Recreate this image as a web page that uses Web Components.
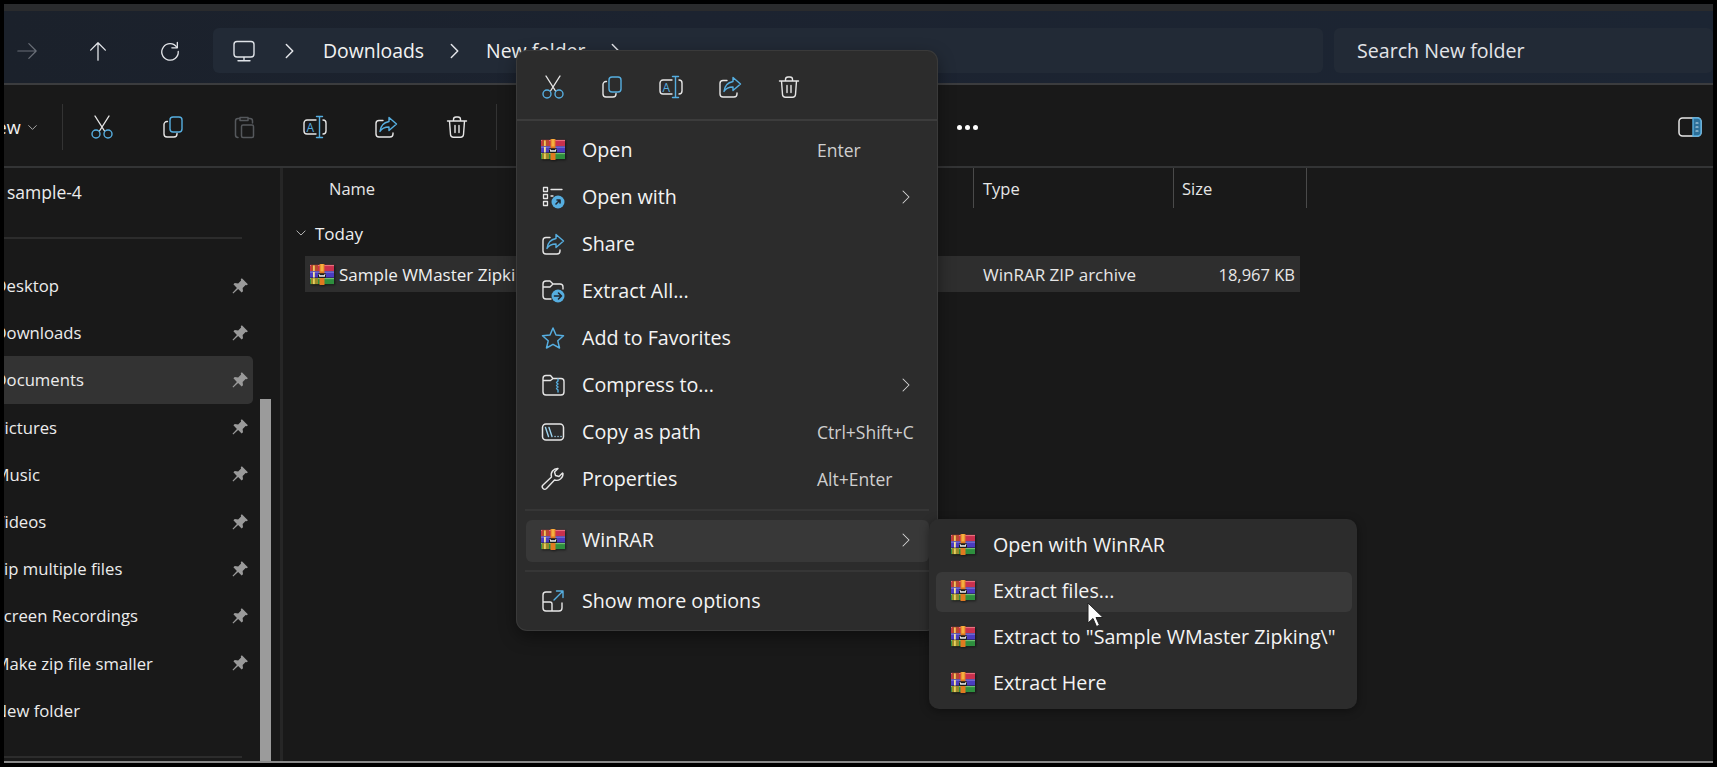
<!DOCTYPE html>
<html lang="en">
<head>
<meta charset="utf-8">
<title>New folder - File Explorer</title>
<style>
  html, body { margin: 0; height: 100%; background: #000; overflow: hidden; }
  body { font-family: "Open Sans", "Liberation Sans", sans-serif; color: #f2f2f2; }
</style>
</head>
<body>

<explorer-window>
  <address-bar></address-bar>
  <command-bar></command-bar>
  <div style="display:flex;flex:1;min-height:0">
    <nav-pane>
      <nav-item pinned>Desktop</nav-item>
      <nav-item pinned>Downloads</nav-item>
      <nav-item pinned active>Documents</nav-item>
      <nav-item pinned>Pictures</nav-item>
      <nav-item pinned>Music</nav-item>
      <nav-item pinned>Videos</nav-item>
      <nav-item pinned>Zip multiple files</nav-item>
      <nav-item pinned>Screen Recordings</nav-item>
      <nav-item pinned>Make zip file smaller</nav-item>
      <nav-item>New folder</nav-item>
    </nav-pane>
    <file-list></file-list>
  </div>
</explorer-window>

<context-menu>
  <menu-item icon="rar" shortcut="Enter">Open</menu-item>
  <menu-item icon="openwith" arrow>Open with</menu-item>
  <menu-item icon="share">Share</menu-item>
  <menu-item icon="extract">Extract All...</menu-item>
  <menu-item icon="star">Add to Favorites</menu-item>
  <menu-item icon="compress" arrow>Compress to...</menu-item>
  <menu-item icon="path" shortcut="Ctrl+Shift+C">Copy as path</menu-item>
  <menu-item icon="wrench" shortcut="Alt+Enter">Properties</menu-item>
</context-menu>

<sub-menu>
  <menu-item icon="rar" compact>Open with WinRAR</menu-item>
  <menu-item icon="rar" compact hot>Extract files...</menu-item>
  <menu-item icon="rar" compact>Extract to "Sample WMaster Zipking\"</menu-item>
  <menu-item icon="rar" compact>Extract Here</menu-item>
</sub-menu>

<mouse-cursor></mouse-cursor>

<script>
// Icon paths, all in a 24x24 box. W = white stroke, B = blue stroke
const W = '#e6e6e6';
const B = '#56aee0';
const line = (d, c = W, sw = 1.4) => `<path d="${d}" fill="none" stroke="${c}" stroke-width="${sw}" stroke-linecap="round" stroke-linejoin="round"/>`;

const ICONS = {
  forward: line('M2 12H22M14 4l8 8-8 8', '#6a6f78', 1.3),
  up: line('M12 22V3M4 11l8-8 8 8', '#e4e6ea', 1.4),
  refresh: line('M19.5 8A9 9 0 1 0 21 12.5', '#e4e6ea', 1.4) + line('M20 2.5V8.5H14', '#e4e6ea', 1.4),
  monitor: line('M5 2.5H19a3 3 0 0 1 3 3V15a3 3 0 0 1-3 3H5a3 3 0 0 1-3-3V5.500a3 3 0 0 1 3-3zM12 18v3.500M6 21.800H18', '#dfe3e8', 1.4),
  chev: line('M8 5l7 7-7 7', '#e4e6ea', 1.6),
  cut: line('M5 1L14.500 16M19 1L9.500 16') + line('M10 19a4 4 0 1 1-8 0 4 4 0 0 1 8 0zM22 19a4 4 0 1 1-8 0 4 4 0 0 1 8 0z', B),
  copy: `<rect x="9" y="2" width="12" height="15" rx="3" fill="none" stroke="${B}" stroke-width="1.4"/>` + line('M6.500 6.500H6a3 3 0 0 0-3 3V19a3 3 0 0 0 3 3h7a3 3 0 0 0 3-3v-.5'),
  paste: line('M8 3.500H6a2.500 2.500 0 0 0-2.500 2.500V20a2.500 2.500 0 0 0 2.500 2.500M16 3.500h2A2.500 2.500 0 0 1 20.500 6v2M8 2.500h8v3H8zM11 10h9a1.500 1.500 0 0 1 1.500 1.500V21a1.500 1.500 0 0 1-1.500 1.500h-9A1.500 1.500 0 0 1 9.500 21v-9.500A1.500 1.500 0 0 1 11 10z', '#55585c', 1.5),
  rename: line('M13 5H4a3 3 0 0 0-3 3v8a3 3 0 0 0 3 3h9M20 5a3 3 0 0 1 3 3v8a3 3 0 0 1-3 3') + line('M16.500 1.500v21M13.500 1.500h6M13.500 22.500h6', B) + `<text x="7.300" y="16.500" text-anchor="middle" font-family="Open Sans, sans-serif" font-size="12" fill="${B}">A</text>`,
  share: line('M9 5.500H5a3 3 0 0 0-3 3V19a3 3 0 0 0 3 3h11a3 3 0 0 0 3-3v-1') + line('M15 2.500l7.500 6.500-7.500 6.500V12c-4 0-7 1-9 4.500C6.500 11 10 7.500 15 6.500z', B),
  trash: line('M2.500 6h19M8.500 6V4.500a2.500 2.500 0 0 1 2.500-2.500h2a2.500 2.500 0 0 1 2.500 2.500V6M4.500 6l1 13.500a3 3 0 0 0 3 2.800h7a3 3 0 0 0 3-2.800l1-13.500M10 10.500v7M14 10.500v7'),
  openwith: line('M2.500 2.500h4v4h-4zM2.500 9.500h4v4h-4zM2.500 16.500h4v4h-4zM10 4.500h11M10 11h2', W, 1.3) + `<circle cx="17" cy="17" r="6.500" fill="${B}"/>` + line('M15 19l4-4M16 15h3v3', '#20262e', 1.6),
  extract: line('M2 8V5a3 3 0 0 1 3-3h4l3 3h7a3 3 0 0 1 3 3v2M2 8v9a3 3 0 0 0 3 3h5M2 8h7l3-3') + `<circle cx="17" cy="17" r="6.500" fill="${B}"/>` + line('M13.500 17h7M17.500 14l3 3-3 3', '#20262e', 1.6),
  star: line('M12 2l3 7 7.500.8-5.700 5 1.700 7.200L12 18.300 5.500 22l1.700-7.200-5.700-5L9 9z', B, 1.5),
  compress: line('M6 2.500h3.500l2.500 3h8a3 3 0 0 1 3 3V19a3 3 0 0 1-3 3H5a3 3 0 0 1-3-3V5.500a3 3 0 0 1 3-3zM2 7.500h7.500l2.500-2') + line('M17 6v2l-1.500 1.500L17 11l-1.500 1.500L17 14l-1.500 1.500L17 17v2', B, 1.4),
  path: `<rect x="1.500" y="4" width="21" height="16" rx="3.500" fill="none" stroke="${W}" stroke-width="1.500"/>` + line('M4.500 7.500l3 9M8 7.500l3 9M14 16.500h.1M17 16.500h.1M20 16.500h.1', '#9ed3ee', 1.4),
  wrench: line('M22 6.500a6.500 6.500 0 0 1-8.500 6.500L5.500 21.500a2.400 2.400 0 0 1-3.500-3.500l8.500-8A6.500 6.500 0 0 1 17 1.500l-3.500 3.500 1 3.500 3.500 1 3.500-3.500z'),
  more: line('M10 3H5a3 3 0 0 0-3 3v13a3 3 0 0 0 3 3h13a3 3 0 0 0 3-3v-5M2 13h7a2 2 0 0 1 2 2v7') + line('M13 11L22 2M15.500 2H22v6.500', B),
  panel: `<rect x="1" y="3" width="22" height="18" rx="3.500" fill="none" stroke="${W}" stroke-width="1.500"/><path d="M15 3h4.500A3.500 3.500 0 0 1 23 6.500v11a3.500 3.500 0 0 1-3.500 3.500H15z" fill="#2d6f98" stroke="${B}" stroke-width="1.400"/>` + line('M18 8h2M18 12h2M18 16h2', '#cfeaf8', 1.200),
  pin: '<path d="M14.500 1.500l8 8-1.500 1.500-1.500-.5-4 4 .5 4.500-1.800 1.800-4.700-4.700L3 22l-1-1 5.900-6.500-4.700-4.700L5 8l4.500.5 4-4-.5-1.500z" fill="#9a9a9a"/>',
  chevDown: line('M5 8.500l7 7 7-7', '#c8c8c8', 1.500),
  chevSmall: line('M8 4l8 8-8 8', '#d6d6d6', 1.400)
};

/* Generic inline svg icon, picked with name="" */
class UiIcon extends HTMLElement {
  connectedCallback() {
    if (this.shadowRoot) return;
    const size = this.getAttribute('size') || 24;
    const shadow = this.attachShadow({ mode: 'open' });
    shadow.innerHTML = `
      <style>
        :host { display: inline-flex; flex: none; width: ${size}px; height: ${size}px; }
        svg { width: 100%; height: 100%; display: block; overflow: visible; }
      </style>
      <svg viewBox="0 0 24 24" aria-hidden="true">${ICONS[this.getAttribute('name')] || ''}</svg>`;
  }
}
customElements.define('ui-icon', UiIcon);

/* The WinRAR stack of books */
const rarTemplate = document.createElement('template');
rarTemplate.innerHTML = `
  <style>
    :host { display: inline-flex; align-items: center; flex: none; width: 24px; height: 24px; }
    svg { width: 100%; height: 21px; display: block; filter: drop-shadow(1px 1px 1px rgb(0 0 0 / .55)); }
  </style>
  <svg viewBox="0 1 24 22.500" preserveAspectRatio="none" aria-hidden="true">
    <rect x="0" y="2" width="24" height="6.500" fill="#c9304e"/>
    <rect x="0" y="2" width="24" height="1.200" fill="#e8707c"/>
    <rect x="0" y="9" width="24" height="6.500" fill="#4a3cc0"/>
    <rect x="0" y="9" width="24" height="1.200" fill="#8a80e0"/>
    <rect x="0" y="16" width="24" height="6.500" fill="#2e8f3e"/>
    <rect x="0" y="16" width="24" height="1.200" fill="#70c070"/>
    <rect x="1" y="2" width="7" height="6.500" fill="#b84a2e"/>
    <rect x="1" y="16" width="7" height="6.500" fill="#9a8a2a"/>
    <rect x="3" y="2.500" width="1.800" height="6" fill="#f0c860"/>
    <rect x="3" y="9.500" width="1.800" height="6" fill="#f4e4a0"/>
    <rect x="3" y="16.500" width="1.800" height="6" fill="#e8d060"/>
    <rect x="9.500" y="1" width="5" height="22.500" fill="#e07a20"/>
    <rect x="10.500" y="1" width="3" height="8" fill="#f4b040"/>
    <rect x="8" y="11" width="8" height="5" rx="1" fill="#1d1d1d"/>
    <path d="M9 11.800l1 3 1-2 1 2 1-2 1 2 1-3" fill="none" stroke="#f0f0f0" stroke-width="1"/>
  </svg>`;
class RarIcon extends HTMLElement {
  connectedCallback() {
    if (this.shadowRoot) return;
    this.attachShadow({ mode: 'open' }).appendChild(rarTemplate.content.cloneNode(true));
  }
}
customElements.define('rar-icon', RarIcon);

/* Outer window: black 4px frame round the whole thing */
const windowTemplate = document.createElement('template');
windowTemplate.innerHTML = `
  <style>
    :host {
      display: flex;
      flex-direction: column;
      height: 759px;
      margin: 4px 4px 0;
      background: #191919;
      overflow: hidden;
      border-bottom: 2px solid #8a8a8a;
      box-sizing: border-box;
    }
    .title { height: 7px; flex: none; background: #2a2b2d; }
  </style>
  <div class="title"></div>
  <slot></slot>`;
class ExplorerWindow extends HTMLElement {
  connectedCallback() {
    if (this.shadowRoot) return;
    this.attachShadow({ mode: 'open' }).appendChild(windowTemplate.content.cloneNode(true));
  }
}
customElements.define('explorer-window', ExplorerWindow);

/* Back / up / refresh, breadcrumb and search */
const addressTemplate = document.createElement('template');
addressTemplate.innerHTML = `
  <style>
    :host {
      display: flex;
      flex: none;
      height: 74px;
      box-sizing: border-box;
      padding: 17px 0 10px;
      background: linear-gradient(90deg, #1b212b, #1c2330 40%, #1c2533);
      background-color: #1b2330;
      border-bottom: 2px solid #3b3c3e;
      gap: 11px;
      font-size: 19.400px;
    }
    .nav { display: flex; align-items: center; width: 209px; flex: none; }
    .nav ui-icon:nth-child(1) { margin-left: 12px; }
    .nav ui-icon:nth-child(2) { margin-left: 49px; }
    .nav ui-icon:nth-child(3) { margin-left: 50px; }
    .crumbs, .search {
      background: #222a36;
      border-radius: 6px;
      display: flex;
      align-items: center;
      white-space: nowrap;
    }
    .crumbs { width: 1110px; flex: none; margin-left: -11px; }
    .crumbs ui-icon.pc { margin-left: 19px; }
    .crumbs ui-icon.c1 { margin-left: 23px; }
    .crumbs span.d { margin-left: 22px; }
    .crumbs ui-icon.c2 { margin-left: 20px; }
    .crumbs span.n { margin-left: 20px; }
    .crumbs ui-icon.c3 { margin-left: 20px; }
    .search { flex: 1; padding-left: 23px; color: #e2e4e8; font-size: 19.600px; }
  </style>
  <div class="nav">
    <ui-icon name="forward" size="22"></ui-icon>
    <ui-icon name="up" size="22"></ui-icon>
    <ui-icon name="refresh" size="22"></ui-icon>
  </div>
  <div class="crumbs">
    <ui-icon class="pc" name="monitor" size="24"></ui-icon>
    <ui-icon class="c1" name="chev" size="22"></ui-icon>
    <span class="d">Downloads</span>
    <ui-icon class="c2" name="chev" size="22"></ui-icon>
    <span class="n">New folder</span>
    <ui-icon class="c3" name="chev" size="22"></ui-icon>
  </div>
  <div class="search">Search New folder</div>`;
class AddressBar extends HTMLElement {
  connectedCallback() {
    if (this.shadowRoot) return;
    this.attachShadow({ mode: 'open' }).appendChild(addressTemplate.content.cloneNode(true));
  }
}
customElements.define('address-bar', AddressBar);

/* New / cut / copy ... toolbar */
const commandTemplate = document.createElement('template');
commandTemplate.innerHTML = `
  <style>
    :host {
      display: flex;
      flex: none;
      height: 83px;
      box-sizing: border-box;
      align-items: center;
      background: #191919;
      border-bottom: 2px solid #333435;
      font-size: 18px;
      padding-top: 3px;
    }
    .new { margin-left: -21px; }
    .dn { margin-left: 5px; }
    .sep { width: 1px; height: 46px; background: #333; flex: none; }
    .s1 { margin-left: 23px; }
    .tools { display: flex; align-items: center; gap: 47px; margin-left: 27px; }
    .s2 { margin-left: 27px; }
    .dots { margin-left: 460px; display: flex; gap: 3px; }
    .dots i { width: 5px; height: 5px; border-radius: 50%; background: #fff; }
    .panel { margin-left: auto; margin-right: 11px; }
  </style>
  <span class="new">New</span>
  <ui-icon class="dn" name="chevDown" size="13"></ui-icon>
  <div class="sep s1"></div>
  <div class="tools">
    <ui-icon name="cut"></ui-icon>
    <ui-icon name="copy"></ui-icon>
    <ui-icon name="paste"></ui-icon>
    <ui-icon name="rename"></ui-icon>
    <ui-icon name="share"></ui-icon>
    <ui-icon name="trash"></ui-icon>
  </div>
  <div class="sep s2"></div>
  <div class="dots"><i></i><i></i><i></i></div>
  <ui-icon class="panel" name="panel"></ui-icon>`;
class CommandBar extends HTMLElement {
  connectedCallback() {
    if (this.shadowRoot) return;
    this.attachShadow({ mode: 'open' }).appendChild(commandTemplate.content.cloneNode(true));
  }
}
customElements.define('command-bar', CommandBar);

/* Left navigation pane with its scrollbar */
const navTemplate = document.createElement('template');
navTemplate.innerHTML = `
  <style>
    :host {
      display: flex;
      flex: none;
      width: 279px;
      box-sizing: border-box;
      border-right: 3px solid #262626;
      font-size: 16.700px;
      color: #ececec;
    }
    .col { width: 249px; flex: none; overflow: hidden; }
    .top { height: 36px; margin-top: 6px; padding-left: 3px; display: flex; align-items: center; font-size: 17.500px; }
    .rule { height: 2px; background: #2c2c2c; width: 238px; }
    .r1 { margin-top: 27px; margin-bottom: 23px; }
    .r2 { margin-top: 22px; }
    .thumb { width: 11px; margin: 231px 0 0 7px; background: #9b9b9b; flex: none; }
  </style>
  <div class="col">
    <div class="top">sample-4</div>
    <div class="rule r1"></div>
    <slot></slot>
    <div class="rule r2"></div>
  </div>
  <div class="thumb"></div>`;
class NavPane extends HTMLElement {
  connectedCallback() {
    if (this.shadowRoot) return;
    this.attachShadow({ mode: 'open' }).appendChild(navTemplate.content.cloneNode(true));
  }
}
customElements.define('nav-pane', NavPane);

const navItemTemplate = document.createElement('template');
navItemTemplate.innerHTML = `
  <style>
    :host {
      display: flex;
      align-items: center;
      height: 47.200px;
      white-space: nowrap;
      border-radius: 0 5px 5px 0;
    }
    :host([active]) { background: #333333; }
    .txt { margin-left: -9.500px; flex: 1; }
  </style>
  <span class="txt"><slot></slot></span>`;
class NavItem extends HTMLElement {
  connectedCallback() {
    if (this.shadowRoot) return;
    const shadow = this.attachShadow({ mode: 'open' });
    shadow.appendChild(navItemTemplate.content.cloneNode(true));
    if (this.hasAttribute('pinned')) {
      const pin = document.createElement('ui-icon');
      pin.setAttribute('name', 'pin');
      pin.setAttribute('size', '18');
      pin.style.marginRight = '4px';
      shadow.appendChild(pin);
    }
  }
}
customElements.define('nav-item', NavItem);

/* Details view */
const listTemplate = document.createElement('template');
listTemplate.innerHTML = `
  <style>
    :host { display: block; flex: 1; font-size: 17px; color: #e6e6e6; min-width: 0; }
    .head { display: flex; height: 40px; align-items: stretch; font-size: 16.500px; }
    .head div { display: flex; align-items: center; box-sizing: border-box; border-right: 1px solid #4a4a4a; }
    .h-name { width: 691px; padding-left: 46px; }
    .h-type { width: 200px; padding-left: 9px; }
    .h-size { width: 133px; padding-left: 8px; }
    .group { display: flex; align-items: center; height: 48px; box-sizing: border-box; padding-top: 2px; font-size: 17px; color: #f0f0f0; margin-left: 11px; gap: 7px; }
    .row {
      display: flex;
      align-items: center;
      height: 36px;
      width: 995px;
      margin-left: 22px;
      background: #2e2e2e;
      white-space: nowrap;
      box-sizing: border-box;
    }
    .row rar-icon { margin-left: 5px; }
    .name { margin-left: 5px; width: 644px; flex: none; color: #f0f0f0; }
    .type { width: 200px; flex: none; }
    .size { width: 112px; flex: none; text-align: right; font-size: 16.500px; }
  </style>
  <div class="head">
    <div class="h-name">Name</div>
    <div class="h-type">Type</div>
    <div class="h-size">Size</div>
  </div>
  <div class="group"><ui-icon name="chevDown" size="14"></ui-icon>Today</div>
  <div class="row">
    <rar-icon></rar-icon>
    <span class="name">Sample WMaster Zipking</span>
    <span class="type">WinRAR ZIP archive</span>
    <span class="size">18,967 KB</span>
  </div>`;
class FileList extends HTMLElement {
  connectedCallback() {
    if (this.shadowRoot) return;
    this.attachShadow({ mode: 'open' }).appendChild(listTemplate.content.cloneNode(true));
  }
}
customElements.define('file-list', FileList);

/* One row of a menu. Icon, label, then shortcut or arrow on the right */
const itemTemplate = document.createElement('template');
itemTemplate.innerHTML = `
  <style>
    :host {
      display: flex;
      align-items: center;
      height: 47px;
      white-space: nowrap;
      font-size: 19.700px;
      color: #f4f4f4;
      border-radius: 6px;
      position: relative;
    }
    :host([compact]) { height: 40px; margin-bottom: 6px; padding-bottom: 3px; box-sizing: border-box; }
    :host([hot]) { background: #393939; }
    .ico { margin-left: 24px; display: flex; width: 24px; height: 24px; flex: none; }
    .label { margin-left: 17px; }
    :host([compact]) .ico { margin-left: 15px; }
    :host([compact]) .label { margin-left: 18px; }
    .key { position: absolute; left: 300px; font-size: 17.500px; color: #cfcfcf; }
    .arrow { position: absolute; left: 380px; }
  </style>
  <span class="ico"></span>
  <span class="label"><slot></slot></span>`;
class MenuItem extends HTMLElement {
  connectedCallback() {
    if (this.shadowRoot) return;
    const shadow = this.attachShadow({ mode: 'open' });
    shadow.appendChild(itemTemplate.content.cloneNode(true));
    const name = this.getAttribute('icon');
    const ico = document.createElement(name === 'rar' ? 'rar-icon' : 'ui-icon');
    if (name !== 'rar') ico.setAttribute('name', name);
    shadow.querySelector('.ico').appendChild(ico);
    if (this.hasAttribute('shortcut')) {
      const key = document.createElement('span');
      key.className = 'key';
      key.textContent = this.getAttribute('shortcut');
      shadow.appendChild(key);
    }
    if (this.hasAttribute('arrow')) {
      const arrow = document.createElement('ui-icon');
      arrow.className = 'arrow';
      arrow.setAttribute('name', 'chevSmall');
      arrow.setAttribute('size', '18');
      shadow.appendChild(arrow);
    }
  }
}
customElements.define('menu-item', MenuItem);

/* Windows 11 right click menu */
const menuTemplate = document.createElement('template');
menuTemplate.innerHTML = `
  <style>
    :host {
      position: absolute;
      left: 517px;
      top: 51px;
      width: 420px;
      height: 579px;
      box-sizing: border-box;
      background: #2c2c2c;
      border-radius: 10px;
      box-shadow: 0 0 0 1px #3a3a3a, 0 6px 18px rgb(0 0 0 / .45);
    }
    .quick { display: flex; align-items: center; height: 70px; gap: 35px; padding: 3px 0 0 24px; border-bottom: 2px solid #3c3c3c; box-sizing: border-box; }
    .rows { padding-top: 5px; }
    .sep { height: 2px; background: #363636; margin: 0 8px; }
    .s1 { margin-top: 7px; }
    .s2 { margin-top: 8px; }
    .win { height: 42px; margin: 9px 8px 0 9px; }
    .win-in { display: flex; height: 100%; box-sizing: border-box; padding-bottom: 3px; align-items: center; background: #383838; border-radius: 6px; position: relative; font-size: 19.700px; color: #f4f4f4; }
    .win-in rar-icon { margin-left: 15px; }
    .win-in span { margin-left: 17px; }
    .win-in ui-icon { position: absolute; left: 371px; }
    .more { display: flex; align-items: center; height: 43px; margin-top: 8px; padding-bottom: 2px; box-sizing: border-box; font-size: 19.700px; color: #f4f4f4; }
    .more ui-icon { margin-left: 24px; }
    .more span { margin-left: 17px; }
  </style>
  <div class="quick">
    <ui-icon name="cut"></ui-icon>
    <ui-icon name="copy"></ui-icon>
    <ui-icon name="rename"></ui-icon>
    <ui-icon name="share"></ui-icon>
    <ui-icon name="trash"></ui-icon>
  </div>
  <div class="rows"><slot></slot></div>
  <div class="sep s1"></div>
  <div class="win"><div class="win-in">
    <rar-icon></rar-icon><span>WinRAR</span><ui-icon name="chevSmall" size="18"></ui-icon>
  </div></div>
  <div class="sep s2"></div>
  <div class="more"><ui-icon name="more"></ui-icon><span>Show more options</span></div>`;
class ContextMenu extends HTMLElement {
  connectedCallback() {
    if (this.shadowRoot) return;
    this.attachShadow({ mode: 'open' }).appendChild(menuTemplate.content.cloneNode(true));
  }
}
customElements.define('context-menu', ContextMenu);

/* WinRAR fly-out, sits on top of the main menu */
const subTemplate = document.createElement('template');
subTemplate.innerHTML = `
  <style>
    :host {
      position: absolute;
      left: 929px;
      top: 519px;
      width: 428px;
      height: 190px;
      box-sizing: border-box;
      padding: 7px 5px 0 7px;
      background: #2c2c2c;
      border-radius: 10px;
      box-shadow: 0 2px 10px rgb(0 0 0 / .4);
    }
  </style>
  <slot></slot>`;
class SubMenu extends HTMLElement {
  connectedCallback() {
    if (this.shadowRoot) return;
    this.attachShadow({ mode: 'open' }).appendChild(subTemplate.content.cloneNode(true));
  }
}
customElements.define('sub-menu', SubMenu);

/* Mouse pointer */
class MouseCursor extends HTMLElement {
  connectedCallback() {
    if (this.shadowRoot) return;
    this.attachShadow({ mode: 'open' }).innerHTML = `
      <style>:host { position: absolute; left: 1087px; top: 602px; width: 18px; height: 26px; }</style>
      <svg width="18" height="26" viewBox="0 0 18 26"><path d="M1 1v20l5-4.500 3.500 8 3-1.300-3.500-7.700H16z" fill="#fff" stroke="#222" stroke-width="1"/></svg>`;
  }
}
customElements.define('mouse-cursor', MouseCursor);
</script>
</body>
</html>
